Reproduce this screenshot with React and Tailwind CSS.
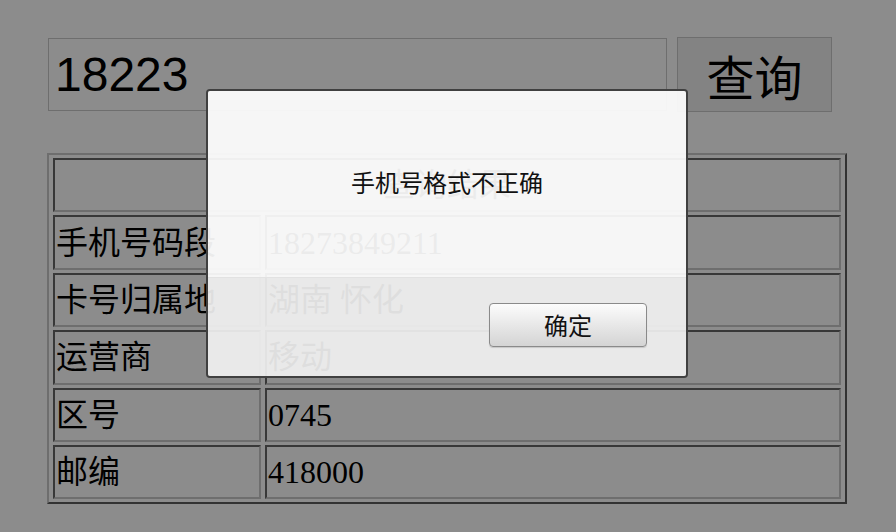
import React from 'react';

const rows = [
  ['手机号码段', '18273849211'],
  ['卡号归属地', '湖南 怀化'],
  ['运营商', '移动'],
  ['区号', '0745'],
  ['邮编', '418000'],
];

const cell = 'h-[54.4px] p-[1px] border-2 border-t-[#666] border-l-[#666] border-r-[#c9c9c9] border-b-[#c9c9c9] text-[32px] leading-none text-black';

const App = () => {
  return (
    <div className="relative w-[896px] h-[532px] bg-white overflow-hidden font-['Liberation_Serif','Noto_Sans_CJK_SC',serif]">
      <div className="flex items-center gap-[10px] pl-[48px] pt-[37px]">
        <input
          readOnly
          defaultValue="18223"
          className="w-[619px] h-[73px] border border-[#c9c9c9] bg-white pl-[6px] text-[48px] text-black font-['Liberation_Sans',sans-serif] outline-none"
        />
        <button className="w-[155px] h-[75px] border border-[#c9c9c9] bg-[#efefef] text-[48px] leading-none text-black font-['Noto_Sans_CJK_SC',sans-serif]">
          查询
        </button>
      </div>

      <table className="ml-[47px] mt-[41px] w-[800px] border-separate border-spacing-x-[4px] border-spacing-y-[3px] border-2 border-t-[#c9c9c9] border-l-[#c9c9c9] border-r-[#5c5c5c] border-b-[#5c5c5c]">
        <tbody>
          <tr>
            <td colSpan={2} className={`${cell} text-center`}>查询结果</td>
          </tr>
          {rows.map(([k, v]) => (
            <tr key={k}>
              <td className={`${cell} w-[208px]`}>{k}</td>
              <td className={cell}>{v}</td>
            </tr>
          ))}
        </tbody>
      </table>

      <div className="absolute inset-0 bg-black/45" />

      <div className="absolute left-[206px] top-[89px] w-[482px] h-[289px] flex flex-col border-2 border-[#404040] rounded-[4px] overflow-hidden font-['Noto_Sans_CJK_SC',sans-serif]">
        <div className="h-[186px] flex items-center justify-center pb-[4px] bg-white/92 text-[24px] text-[#111]">
          手机号格式不正确
        </div>
        <div className="flex-1 flex items-start justify-end pt-[25px] pr-[39px] bg-[#f1f1f1]/92 border-t border-[#e2e2e2]">
          <button className="w-[158px] h-[44px] rounded-[4px] border border-[#8a8a8a] bg-gradient-to-b from-[#fcfcfc] to-[#d4d4d4] text-[24px] leading-none text-[#111] shadow-[0_1px_1px_rgba(0,0,0,0.15)]">
            确定
          </button>
        </div>
      </div>
    </div>
  );
};

export default App;
